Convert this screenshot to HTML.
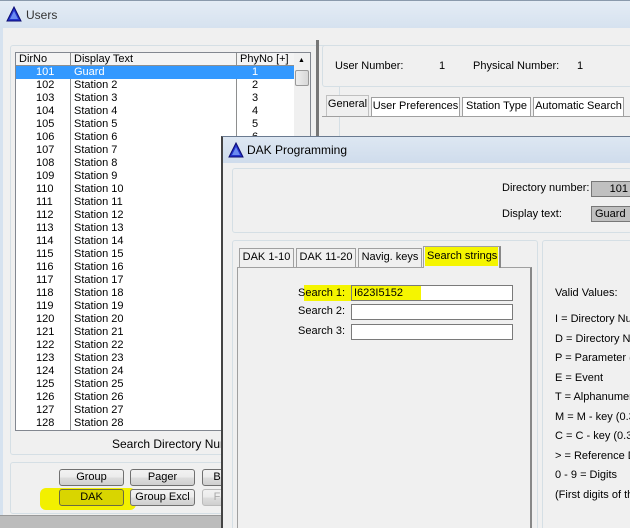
<!DOCTYPE html><html><head><style>
*{box-sizing:border-box;margin:0;padding:0}
html,body{width:630px;height:528px;overflow:hidden}
body{background:#f0f0f0;font-family:"Liberation Sans",sans-serif;font-size:11px;color:#000}
#w{position:relative;width:630px;height:528px;overflow:hidden}
.a{position:absolute}
.grp{position:absolute;border:1px solid #d5dfe5;border-radius:3px;background:#f0f0f0}
.btn{position:absolute;border:1px solid #707070;border-radius:3px;background:linear-gradient(#f2f2f2,#ebebeb 50%,#dddddd 51%,#cfcfcf);text-align:center;line-height:15px}
.row{position:absolute;left:0;width:278px;height:13px;line-height:13px}
.row span{position:absolute}
.tab{position:absolute;border:1px solid #a0a0a0;border-bottom:none;background:#f0f0f0;text-align:center;line-height:17px}
.inp{position:absolute;background:#fff;border:1px solid #7a7a7a}
</style></head><body><div id="w">
<div class="a" style="left:0;top:0;width:630px;height:28px;background:linear-gradient(#e4ecf5,#d6e2ef);border-top:1px solid #8a9aac"></div>
<svg class="a" style="top:6px;left:6px" width="16" height="16"><polygon points="8,1 15,15 1,15" fill="#2233cc" stroke="#0a0a70"/><polygon points="8,5 12,13 4,13" fill="#6a8af0"/></svg>
<div class="a" style="left:26px;top:8px;font-size:12px;color:#333">Users</div>
<div class="a" style="left:0;top:28px;width:3px;height:500px;background:#d6e2ef"></div>
<div class="grp" style="left:10px;top:45px;width:330px;height:410px"></div>
<div class="a" style="left:15px;top:52px;width:296px;height:379px;border:1px solid #828790;background:#fff;overflow:hidden">
 <div class="a" style="left:0;top:0;width:278px;height:13px;background:#f4f4f4;border-bottom:1px solid #8e8f8f"></div>
 <div class="a" style="left:54px;top:0;width:1px;height:378px;background:#8e8f8f"></div>
 <div class="a" style="left:220px;top:0;width:1px;height:378px;background:#8e8f8f"></div>
 <div class="a" style="left:3px;top:0;line-height:13px">DirNo</div>
 <div class="a" style="left:58px;top:0;line-height:13px">Display Text</div>
 <div class="a" style="left:224px;top:0;line-height:13px">PhyNo [+]</div>
 <div class="a" style="left:278px;top:0;width:16px;height:378px;background:#f0f0f0"></div>
 <div class="a" style="left:282px;top:4px;font-size:7px">▲</div>
 <div class="a" style="left:279px;top:17px;width:14px;height:16px;border:1px solid #999;border-radius:2px;background:linear-gradient(90deg,#eee,#d8d8d8)"></div>
 <div id="rows" class="a" style="left:0;top:13px;width:278px"></div>
</div>
<div class="a" style="left:112px;top:437px;font-size:12px">Search Directory Numb</div>
<div class="grp" style="left:10px;top:462px;width:330px;height:52px"></div>
<div class="btn" style="left:59px;top:469px;width:65px;height:17px">Group</div>
<div class="btn" style="left:130px;top:469px;width:65px;height:17px">Pager</div>
<div class="btn" style="left:202px;top:469px;width:30px;height:17px">B</div>
<div class="a" style="left:40px;top:488px;width:96px;height:22px;background:#f2f000;border-radius:6px"></div>
<div class="btn" style="left:59px;top:489px;width:65px;height:17px;background:#d9d500;border-color:#6b6b40">DAK</div>
<div class="btn" style="left:130px;top:489px;width:65px;height:17px">Group Excl</div>
<div class="btn" style="left:202px;top:489px;width:30px;height:17px;border-color:#bbb;color:#aaa">F</div>
<div class="a" style="left:0;top:515px;width:224px;height:13px;background:#bcbcbc;border-top:1px solid #999"></div>
<div class="a" style="left:316px;top:40px;width:3px;height:100px;background:#777"></div>
<div class="grp" style="left:322px;top:45px;width:310px;height:42px"></div>
<div class="a" style="left:335px;top:60px">User Number:</div>
<div class="a" style="left:439px;top:60px">1</div>
<div class="a" style="left:473px;top:60px">Physical Number:</div>
<div class="a" style="left:577px;top:60px">1</div>
<div class="tab" style="left:326px;top:95px;width:43px;height:21px;border-color:#c0c0c0">General</div>
<div class="tab" style="left:371px;top:97px;width:89px;height:19px;background:#fff">User Preferences</div>
<div class="tab" style="left:462px;top:97px;width:69px;height:19px;background:#fff">Station Type</div>
<div class="tab" style="left:533px;top:97px;width:91px;height:19px;background:#fff">Automatic Search</div>
<div class="a" style="left:322px;top:116px;width:310px;height:1px;background:#a0a0a0"></div>
<div class="a" style="left:221px;top:136px;width:409px;height:392px;background:#f0f0f0;border-left:2px solid #444;border-top:1px solid #6a7a90"></div>
<div class="a" style="left:223px;top:137px;width:407px;height:26px;background:linear-gradient(#dde7f2,#cfdcec)"></div>
<svg class="a" style="left:228px;top:142px" width="16" height="16"><polygon points="8,1 15,15 1,15" fill="#2233cc" stroke="#0a0a70"/><polygon points="8,5 12,13 4,13" fill="#6a8af0"/></svg>
<div class="a" style="left:247px;top:143px;font-size:12px">DAK Programming</div>
<div class="grp" style="left:232px;top:168px;width:400px;height:65px"></div>
<div class="a" style="left:502px;top:182px">Directory number:</div>
<div class="a" style="left:591px;top:181px;width:42px;height:16px;background:#c0c0c0;border:1px solid #777;text-align:right;padding-right:4px;line-height:14px">101</div>
<div class="a" style="left:502px;top:208px">Display text:</div>
<div class="a" style="left:591px;top:206px;width:42px;height:16px;background:#c0c0c0;border:1px solid #777;padding-left:3px;line-height:14px">Guard</div>
<div class="grp" style="left:232px;top:240px;width:306px;height:300px"></div>
<div class="a" style="left:237px;top:267px;width:295px;height:270px;border:1px solid #a0a0a0;border-right:2px solid #888;background:#f0f0f0"></div>
<div class="tab" style="left:239px;top:248px;width:55px;height:19px">DAK 1-10</div>
<div class="tab" style="left:296px;top:248px;width:60px;height:19px">DAK 11-20</div>
<div class="tab" style="left:358px;top:248px;width:64px;height:19px">Navig. keys</div>
<div class="tab" style="left:423px;top:246px;width:78px;height:22px;border-right:2px solid #888"></div>
<div class="a" style="left:425px;top:247px;width:73px;height:19px;background:#f5f500"></div>
<div class="a" style="left:427px;top:250px">Search strings</div>
<div class="a" style="left:304px;top:285px;width:96px;height:16px;background:#f5f500"></div>
<div class="a" style="left:298px;top:287px">Search 1:</div>
<div class="inp" style="left:351px;top:285px;width:162px;height:16px"></div>
<div class="a" style="left:352px;top:286px;width:69px;height:14px;background:#f5f500"></div>
<div class="a" style="left:354px;top:287px">I623I5152</div>
<div class="a" style="left:298px;top:305px">Search 2:</div>
<div class="inp" style="left:351px;top:304px;width:162px;height:16px"></div>
<div class="a" style="left:298px;top:325px">Search 3:</div>
<div class="inp" style="left:351px;top:324px;width:162px;height:16px"></div>
<div class="grp" style="left:542px;top:240px;width:92px;height:300px"></div>
<div class="a" style="left:555px;top:287px;white-space:nowrap">Valid Values:</div>
<div class="a" style="left:555px;top:310px;line-height:19.5px;white-space:nowrap">I = Directory Number<br>D = Directory Number<br>P = Parameter (I<br>E = Event<br>T = Alphanumeric<br>M = M - key (0.3<br>C = C - key (0.3<br>&gt; = Reference D<br>0 - 9 = Digits<br>(First digits of the</div>
</div>
<script>
var r=document.getElementById('rows'),h='';
for(var i=0;i<28;i++){var sel=i==0;h+='<div class="row" style="top:'+(i*13)+'px;'+(sel?'background:#3399ff;color:#fff':'')+'"><span style="left:20px">'+(101+i)+'</span><span style="left:58px">'+(sel?'Guard':'Station '+(i+1))+'</span><span style="left:236px">'+(i+1)+'</span></div>';}
r.innerHTML=h;
</script>
</body></html>
